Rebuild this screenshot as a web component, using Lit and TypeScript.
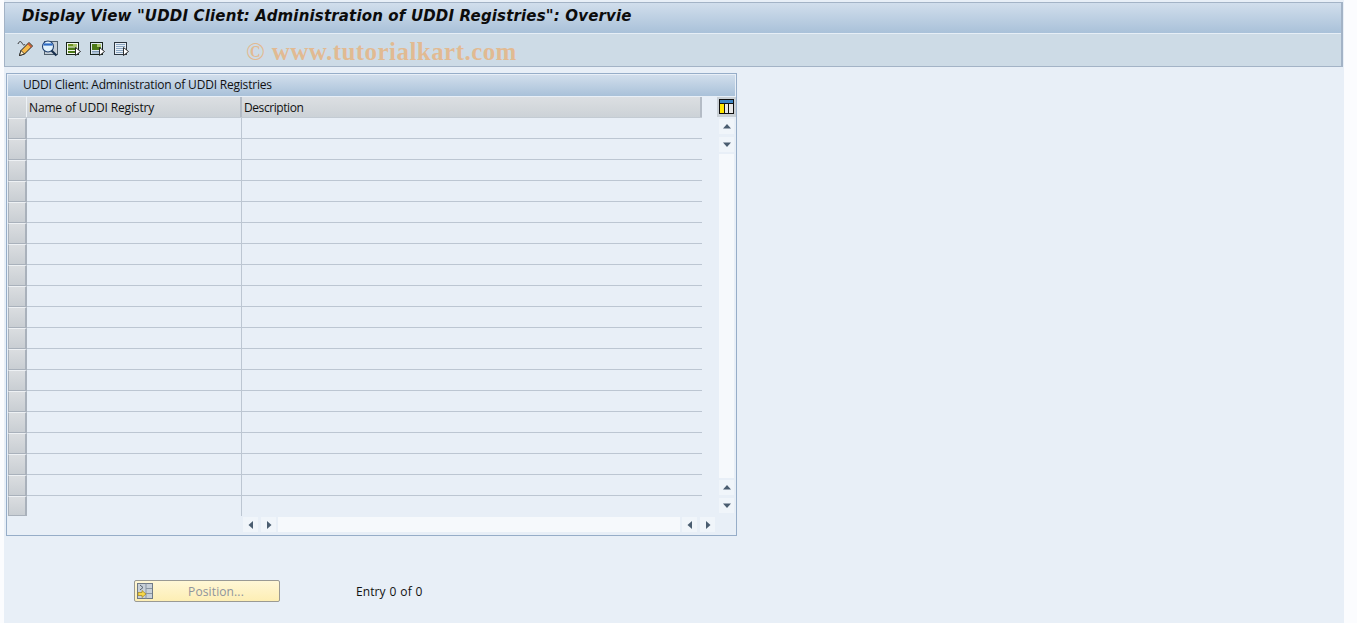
import { LitElement, html, css, svg } from "lit";
import { customElement } from "lit/decorators.js";

const tri = (d: string) => {
  const p: Record<string, string> = {
    up: "1,6.500 5,2 9,6.500",
    down: "1,2.500 9,2.500 5,7",
    left: "7,1 2.500,5 7,9",
    right: "3,1 7.500,5 3,9",
  };
  return html`<svg width="10" height="10" viewBox="0 0 10 10"><polygon points=${p[d]} fill="#4a5d70"></polygon></svg>`;
};

const arrow = svg`<polygon points="10.500,7.500 15.500,11.500 10.500,15.500" fill="#fff" stroke="#1c1c1c" stroke-width=".9"></polygon>`;

@customElement("app-root")
export class AppRoot extends LitElement {
  static styles = css`
    :host { display: block; width: 1357px; height: 623px; overflow: hidden; background: #fbfcfe; font-family: "Open Sans", "Liberation Sans", sans-serif; color: #111; position: relative; }
    .page { width: 1340px; height: 623px; margin-left: 4px; background: #e8eff7; box-sizing: border-box; padding-top: 2px; }
    .head { border: 1px solid #a3b3c6; border-right-width: 2px; margin-bottom: 6px; background: #fff; margin-right: 1px; }
    .title { height: 31px; box-sizing: border-box; padding-left: 17px; background: linear-gradient(#d1deec, #a9c1d9); font: italic bold 15px/27px "DejaVu Sans", sans-serif; letter-spacing: .16px; color: #0c0c0c; white-space: nowrap; overflow: hidden; border-bottom: 1px solid #e6eef6; }
    .tools { height: 32px; box-sizing: border-box; background: #cddbe6; display: flex; align-items: flex-start; gap: 7px; padding: 6px 0 0 12px; }
    .ti { display: block; }
    .mark { position: absolute; left: 246px; top: 37px; font: bold 25px/30px "Liberation Serif", serif; letter-spacing: .45px; color: rgba(240, 165, 90, .6); white-space: nowrap; }
    .panel { width: 731px; height: 463px; margin-left: 2px; box-sizing: border-box; border: 1px solid #96adc8; padding: 1px; display: flex; flex-direction: column; }
    .ptitle { height: 21px; flex: none; box-sizing: border-box; padding-left: 15px; background: linear-gradient(#d1deec, #a9c1d9); font-size: 12px; line-height: 20px; letter-spacing: -.2px; white-space: nowrap; }
    .gridwrap { display: flex; margin-top: 1px; }
    .table { width: 694px; flex: none; }
    .hrow { display: flex; height: 21px; background: linear-gradient(#dcdfe2, #ccd2d7); border-bottom: 1px solid #c3cbd3; box-sizing: border-box; }
    .corner { width: 19px; flex: none; border-right: 1px solid #eef2f6; box-sizing: border-box; }
    .hc { box-sizing: border-box; padding-left: 2px; font-size: 12px; line-height: 21px; letter-spacing: -.15px; white-space: nowrap; border-right: 2px solid #b4bcc6; }
    .c1 { width: 215px; flex: none; }
    .c2 { width: 460px; flex: none; letter-spacing: -.42px; }
    .row { display: flex; height: 21px; box-sizing: border-box; }
    .sel { width: 19px; height: 21px; flex: none; box-sizing: border-box; background: linear-gradient(#dadde0, #c9ced3); border: 1px solid #a9b1bb; border-top-color: #eef1f4; border-right-width: 2px; }
    .cell { height: 21px; box-sizing: border-box; border-bottom: 1px solid #bcc6d2; }
    .cell.a { width: 215px; flex: none; border-right: 1px solid #bcc6d2; }
    .cell.b { width: 460px; flex: none; }
    .row.last { height: 20px; }
    .row.last .sel, .row.last .cell { height: 20px; }
    .row.last .cell { border-bottom: none; }
    .side { width: 19px; margin-left: 15px; flex: none; display: flex; flex-direction: column; align-items: center; }
    .cfg { width: 19px; height: 20px; background: #c9d0d6; display: flex; justify-content: center; box-sizing: border-box; padding-top: 2px; margin-bottom: 2px; }
    .cfg svg { display: block; }
    .sb { width: 15px; height: 15px; background: #f0f5fa; display: flex; align-items: center; justify-content: center; margin-bottom: 3px; flex: none; }
    .sb.tight { margin-bottom: 2px; }
    .track { width: 15px; height: 324px; background: #f6f9fc; margin-bottom: 2px; }
    .hbar { display: flex; align-items: center; height: 15px; margin: 1px 0 0 235px; }
    .hbar .sb { margin-bottom: 0; }
    .hbar .next { margin-left: 3px; }
    .hbar .track2 { width: 402px; height: 15px; background: #f6f9fc; margin: 0 2px; }
    .bottom { display: flex; align-items: center; margin: 44px 0 0 130px; }
    .btn { width: 146px; height: 22px; box-sizing: border-box; border: 1px solid #9a9a94; border-radius: 2px; background: linear-gradient(#fff7d6, #fdeeb4); display: flex; align-items: center; color: #8f949c; font-size: 12px; letter-spacing: .12px; padding-left: 2px; }
    .btn span { flex: 1; text-align: center; }
    .entry { margin-left: 76px; font-size: 12px; letter-spacing: .1px; word-spacing: .6px; }
  `;

  render() {
    const rows = Array.from({ length: 19 }, (_, i) => i);
    return html`
      <div class="page">
        <div class="head">
          <div class="title">Display View "UDDI Client: Administration of UDDI Registries": Overvie</div>
          <div class="tools">
            <svg class="ti" width="17" height="17" viewBox="0 0 17 17">
              <path d="M1 4c1-3 3-3 4-1s2 3 3 1" stroke="#333" fill="none"></path>
              <path d="M2.500 15.500l1.500-5 8-8 3.500 3.500-8 8z" fill="#f5b94a" stroke="#1c1c1c"></path>
              <path d="M2.500 15.500l1.500-5 3.500 3.500z" fill="#fff0cc" stroke="#1c1c1c" stroke-width=".8"></path>
              <path d="M11 3.500l3.500 3.500" stroke="#c8503c" stroke-width="1.500"></path>
            </svg>
            <svg class="ti" width="17" height="17" viewBox="0 0 17 17">
              <rect x="3.500" y="1.500" width="13" height="13" fill="#c5ced6" stroke="#50606c"></rect>
              <circle cx="7" cy="6.500" r="5.500" fill="#e2f2fb" stroke="#1f3f6e" stroke-width="1.100"></circle>
              <path d="M2.500 4.500h9" stroke="#2c6ac4" stroke-width="2.200"></path>
              <path d="M10.500 10.500l5 5" stroke="#18304e" stroke-width="2.200"></path>
            </svg>
            <svg class="ti" width="17" height="17" viewBox="0 0 17 17">
              <rect x="1.500" y="2.500" width="12" height="12" fill="#f4f8ee" stroke="#16241a"></rect>
              <rect x="3" y="4" width="9" height="2.500" fill="#6f9320"></rect>
              <rect x="3" y="7.500" width="9" height="2.500" fill="#4d7a18"></rect>
              <rect x="3" y="11" width="9" height="2" fill="#4d7a18"></rect>
              <rect x="8" y="4" width="4" height="2.500" fill="#a9c46a"></rect>
              ${arrow}
            </svg>
            <svg class="ti" width="17" height="17" viewBox="0 0 17 17">
              <rect x="1.500" y="2.500" width="12" height="12" fill="#dfe9f2" stroke="#16241a"></rect>
              <rect x="3" y="4" width="9" height="6" fill="#4d7a18"></rect>
              <rect x="8" y="4" width="4" height="3" fill="#a9c46a"></rect>
              <path d="M3 11.500h9M3 13h9" stroke="#7e99b4"></path>
              ${arrow}
            </svg>
            <svg class="ti" width="17" height="17" viewBox="0 0 17 17">
              <rect x="1.500" y="2.500" width="12" height="12" fill="#e6eef6" stroke="#2c3640"></rect>
              <path d="M3 4.500h9M3 6.500h9M3 8.500h9M3 10.500h9M3 12.500h9" stroke="#8aa6c2"></path>
              ${arrow}
            </svg>
          </div>
        </div>
        <div class="panel">
          <div class="ptitle">UDDI Client: Administration of UDDI Registries</div>
          <div class="gridwrap">
            <div class="table">
              <div class="hrow">
                <div class="corner"></div>
                <div class="hc c1">Name of UDDI Registry</div>
                <div class="hc c2">Description</div>
              </div>
              ${rows.map(
                (i) => html`<div class="row ${i === 18 ? "last" : ""}">
                  <div class="sel"></div>
                  <div class="cell a"></div><div class="cell b"></div>
                </div>`
              )}
            </div>
            <div class="side">
              <div class="cfg">
                <svg width="15" height="15" viewBox="0 0 15 15">
                  <rect x="0" y="0" width="15" height="15" fill="#111"></rect>
                  <rect x="1" y="1" width="13" height="3" fill="#3d86c6"></rect>
                  <rect x="1" y="5" width="4" height="9" fill="#ffe600"></rect>
                  <rect x="6" y="5" width="3" height="9" fill="#e8e8e8"></rect>
                  <rect x="10" y="5" width="4" height="9" fill="#e8e8e8"></rect>
                </svg>
              </div>
              <div class="sb">${tri("up")}</div>
              <div class="sb tight">${tri("down")}</div>
              <div class="track"></div>
              <div class="sb">${tri("up")}</div>
              <div class="sb">${tri("down")}</div>
            </div>
          </div>
          <div class="hbar">
            <div class="sb">${tri("left")}</div>
            <div class="sb next">${tri("right")}</div>
            <div class="track2"></div>
            <div class="sb">${tri("left")}</div>
            <div class="sb next">${tri("right")}</div>
          </div>
        </div>
        <div class="bottom">
          <div class="btn">
            <svg width="16" height="16" viewBox="0 0 16 16">
              <rect x=".5" y=".5" width="15" height="15" fill="#c8d0d8" stroke="#707a86"></rect>
              <path d="M9 .5v15M9 5.500h6M9 10.500h6" stroke="#8a96a2"></path>
              <path d="M3 2l3 2.500-3 2.500" stroke="#55606c" fill="none"></path>
              <polygon points="1,9.500 5,9.500 5,7.500 9,11 5,14.500 5,12.500 1,12.500" fill="#f7d84a" stroke="#a08420" stroke-width=".7"></polygon>
            </svg>
            <span>Position...</span>
          </div>
          <div class="entry">Entry 0 of 0</div>
        </div>
        <div class="mark">© www.tutorialkart.com</div>
      </div>
    `;
  }
}
